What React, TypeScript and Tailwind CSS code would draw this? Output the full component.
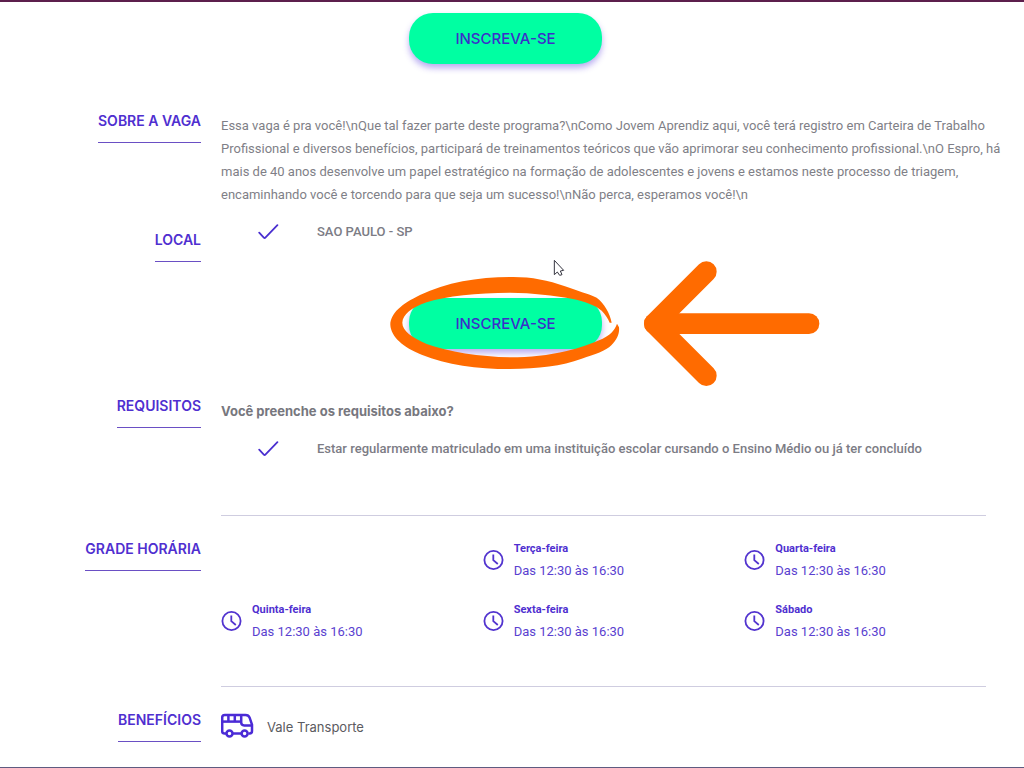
import type { ReactNode } from 'react'

const DIAS = [
  { dia: 'Terça-feira', horario: 'Das 12:30 às 16:30' },
  { dia: 'Quarta-feira', horario: 'Das 12:30 às 16:30' },
  { dia: 'Quinta-feira', horario: 'Das 12:30 às 16:30' },
  { dia: 'Sexta-feira', horario: 'Das 12:30 às 16:30' },
  { dia: 'Sábado', horario: 'Das 12:30 às 16:30' }
]

/* =========================================
   ÍCONES
========================================= */
function CheckIcon() {
  return (
    <svg viewBox="0 0 22 18" className="h-[18px] w-[22px]" fill="none" stroke="#4a2fd0" strokeWidth="1.8" aria-hidden="true">
      <path d="M1.2 9.6 L5.8 14.6 Q6.7 15.4 7.6 14.4 L19.4 2.2" strokeLinecap="round" />
    </svg>
  )
}

function ClockIcon() {
  return (
    <svg viewBox="0 0 21 21" className="size-[21px] shrink-0" fill="none" stroke="#5234cf" strokeWidth="1.8" aria-hidden="true">
      <circle cx="10.5" cy="10" r="9.1" />
      <path d="M10.3 4.4 V10.2 L14.8 14" />
    </svg>
  )
}

function BusIcon() {
  return (
    <svg viewBox="1 0 34 32" className="h-8 w-[34px] shrink-0" fill="none" stroke="#4b2bd6" strokeWidth="2.5" strokeLinejoin="round" aria-hidden="true">
      <path d="M6.2 21.5 H4.4 Q2.2 21.5 2.2 19.3 V5.6 Q2.2 3 4.8 3 H25.5 Q28.6 3 29.6 5.6 L32 12.6 V19 Q32 21.5 29.6 21.5 H28.4" />
      <path d="M12.8 21.5 H21.4" />
      <path d="M2.2 9.6 H21.2" />
      <path d="M8.4 3 V9.6 M14.8 3 V9.6 M21.2 3 V10.6 Q21.2 13.4 24.2 13.4 H32" />
      <circle cx="9.5" cy="21.6" r="3" />
      <circle cx="24.6" cy="21.6" r="3" />
    </svg>
  )
}

/* Círculo, seta e cursor desenhados por cima do botão */
function Destaque() {
  return (
    <svg
      viewBox="0 0 1350 450"
      className="pointer-events-none absolute -top-12 -left-[29px] h-[150px] w-[450px] max-w-none"
      aria-hidden="true"
    >
      <path
        fill="#ff6b00"
        d="M695 218 C690 190 673 160 650 143 C625 132 590 122 555 109 C505 91 455 81 400 81 C300 80 200 96 120 135 C65 162 31 190 31 225 C33 260 70 293 125 314 C200 344 290 357 390 357 C475 356 545 348 605 326 C645 314 678 302 694 286 C712 268 719 250 717 232 L711 221 C704 242 690 255 668 266 C635 280 600 294 560 303 C505 316 450 322 390 322 C300 320 205 306 140 282 C95 262 67 242 67 218 C68 193 95 173 140 157 C200 137 290 129 390 128 C460 129 520 136 575 146 C615 154 645 165 665 182 C675 192 684 205 689 218 Z"
      />
      <g fill="none" stroke="#ff6b00" strokeWidth="62" strokeLinecap="round" strokeLinejoin="round">
        <path d="M979 65 L823 221 L979 377" />
        <path d="M823 221 H1287" />
      </g>
      <path
        d="M523 31 V74 L532 66 L539 76 L546 74 L541 63 L551 61 Z"
        fill="#fff"
        stroke="#353540"
        strokeWidth="3"
      />
    </svg>
  )
}

function BotaoInscrever() {
  return (
    <button
      type="button"
      className="h-[51px] w-[193px] rounded-[24px] bg-[#00ffa2] pt-0.5 font-[Inter,sans-serif] text-[15px] font-medium text-[#3b2fc9] shadow-[0_4px_6px_rgba(80,50,220,0.4)]"
    >
      INSCREVA-SE
    </button>
  )
}

function Secao({ titulo, divisor = false, children }: { titulo: string; divisor?: boolean; children: ReactNode }) {
  return (
    <section className="grid grid-cols-[201px_minmax(0,1fr)] gap-x-5 pr-[25px]">
      <div className={divisor ? 'pt-[22px] text-right' : 'pt-2 text-right'}>
        <h2 className="inline-block border-b border-[#6a4fc4] pb-[9px] align-top font-[Inter,sans-serif] text-[14px] leading-6 font-semibold whitespace-nowrap text-[#4f2fd0]">
          {titulo}
        </h2>
      </div>
      <div className={divisor ? 'border-t border-[#cfcde0]' : ''}>{children}</div>
    </section>
  )
}

function Item({ children }: { children: ReactNode }) {
  return (
    <li className="flex items-center text-[13px] leading-[23px] font-medium text-[#7c7c85]">
      <span className="flex w-24 shrink-0 justify-center">
        <CheckIcon />
      </span>
      {children}
    </li>
  )
}

export default function App() {
  return (
    <main className="min-h-screen overflow-x-hidden border-t-2 border-b border-t-[#5c1f4c] border-b-[#5f5b80] bg-white pt-[11px] pr-[13px] pb-[23px] font-[Roboto,sans-serif]">
      <div className="flex justify-center">
        <BotaoInscrever />
      </div>

      {/* ================= SOBRE A VAGA ================= */}
      <div className="mt-[37px]">
        <Secao titulo="SOBRE A VAGA">
          <p className="-mr-5 pt-[13px] text-[13px] leading-[23px] text-[#7f7f87]">
            Essa vaga é pra você!\nQue tal fazer parte deste programa?\nComo Jovem Aprendiz aqui, você terá registro em
            Carteira de Trabalho Profissional e diversos benefícios, participará de treinamentos teóricos que vão
            aprimorar seu conhecimento profissional.\nO Espro, há mais de 40 anos desenvolve um papel estratégico na
            formação de adolescentes e jovens e estamos neste processo de triagem, encaminhando você e torcendo para
            que seja um sucesso!\nNão perca, esperamos você!\n
          </p>
        </Secao>
      </div>

      {/* ================= LOCAL ================= */}
      <div className="mt-[14px]">
        <Secao titulo="LOCAL">
          <ul>
            <Item>SAO PAULO - SP</Item>
          </ul>
        </Secao>
      </div>

      <div className="mt-9 flex justify-center">
        <div className="relative">
          <BotaoInscrever />
          <Destaque />
        </div>
      </div>

      {/* ================= REQUISITOS ================= */}
      <div className="mt-[37px]">
        <Secao titulo="REQUISITOS">
          <h3 className="pt-[13px] font-[Inter,sans-serif] text-[13px] leading-6 font-bold text-[#77777e]">
            Você preenche os requisitos abaixo?
          </h3>
          <ul className="mt-[14px] mb-[55px]">
            <Item>Estar regularmente matriculado em uma instituição escolar cursando o Ensino Médio ou já ter concluído</Item>
          </ul>
        </Secao>
      </div>

      {/* ================= GRADE HORÁRIA ================= */}
      <Secao titulo="GRADE HORÁRIA" divisor>
        <ul className="grid grid-cols-3 gap-x-5 gap-y-[17px] pt-[22px] pb-[43px]">
          {DIAS.map((item, i) => (
            <li
              key={item.dia}
              className={i === 0 ? 'col-start-2 flex items-center gap-2.5' : 'flex items-center gap-2.5'}
            >
              <ClockIcon />
              <div className="text-[#5a3fd0]">
                <h3 className="text-[11px] leading-[22px] font-bold text-[#4f2fd0]">{item.dia}</h3>
                <p className="text-[13px] leading-[22px]">{item.horario}</p>
              </div>
            </li>
          ))}
        </ul>
      </Secao>

      {/* ================= BENEFÍCIOS ================= */}
      <Secao titulo="BENEFÍCIOS" divisor>
        <div className="flex items-center gap-3 pt-[25px]">
          <BusIcon />
          <span className="font-[Inter,sans-serif] text-[13px] text-[#5b5b60]">Vale Transporte</span>
        </div>
      </Secao>
    </main>
  )
}
